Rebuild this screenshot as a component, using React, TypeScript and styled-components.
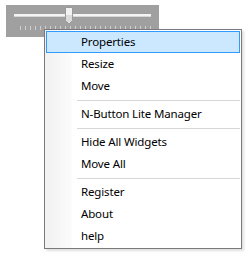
import React from "react";
import styled, { createGlobalStyle } from "styled-components";

const GlobalStyle = createGlobalStyle`
  html, body {
    margin: 0;
    padding: 0;
    background: #fff;
  }
  body {
    font-family: "Segoe UI", "Noto Sans", "Liberation Sans", sans-serif;
    font-size: 11.5px;
  }
`;

const Page = styled.div`
  position: relative;
  width: 246px;
  height: 253px;
  overflow: hidden;
  background: #fff;
`;

const WidgetPanel = styled.div`
  margin: 5px 0 0 6px;
  width: 153px;
  height: 32px;
  background: #a0a0a0;
  position: relative;
`;

const SliderSvg = styled.svg`
  display: block;
`;

const Menu = styled.div`
  position: absolute;
  left: 44px;
  top: 29px;
  width: 194px;
  border: 1px solid #7a7a7a;
  background: linear-gradient(to right, #f1f1f1 0px, #fbfbfb 26px, #fff 27px);
  box-shadow: 2px 2px 2px rgba(0, 0, 0, 0.12);
  padding: 1px;
  display: flex;
  flex-direction: column;
`;

const Item = styled.div<{ $active?: boolean }>`
  height: 22px;
  box-sizing: border-box;
  display: flex;
  align-items: center;
  padding-left: 34px;
  padding-bottom: 1px;
  color: #000;
  letter-spacing: -0.15px;
  border: 1px solid ${(p) => (p.$active ? "#3399ff" : "transparent")};
  background: ${(p) => (p.$active ? "#cce8ff" : "transparent")};
  white-space: nowrap;
`;

const Separator = styled.div`
  height: 6px;
  display: flex;
  align-items: center;
  padding-left: 31px;

  &::after {
    content: "";
    flex: 1;
    height: 1px;
    background: #d7d7d7;
  }
`;

const ticks = Array.from({ length: 27 }, (_, i) => 14 + i * 5);

const Slider: React.FC = () => (
  <SliderSvg width="153" height="32" viewBox="0 0 153 32">
    <rect x="8" y="9" width="137" height="3" fill="#f4f4f4" />
    <rect x="8" y="11" width="137" height="1" fill="#d8d8d8" />
    {ticks.map((x) => (
      <rect key={x} x={x} y="21" width="1" height="4" fill="#cfcfcf" />
    ))}
    <path
      d="M59.5 2.5 H66.5 V15.5 L63 19 L59.5 15.5 Z"
      fill="#f2f2f2"
      stroke="#9a9a9a"
      strokeWidth="1"
    />
    <path d="M60 10 H66 V15.3 L63 18.3 L60 15.3 Z" fill="#dcdcdc" />
  </SliderSvg>
);

const App: React.FC = () => (
  <Page>
    <GlobalStyle />
    <WidgetPanel>
      <Slider />
    </WidgetPanel>
    <Menu>
      <Item $active>Properties</Item>
      <Item>Resize</Item>
      <Item>Move</Item>
      <Separator />
      <Item>N-Button Lite Manager</Item>
      <Separator />
      <Item>Hide All Widgets</Item>
      <Item>Move All</Item>
      <Separator />
      <Item>Register</Item>
      <Item>About</Item>
      <Item>help</Item>
    </Menu>
  </Page>
);

export default App;
